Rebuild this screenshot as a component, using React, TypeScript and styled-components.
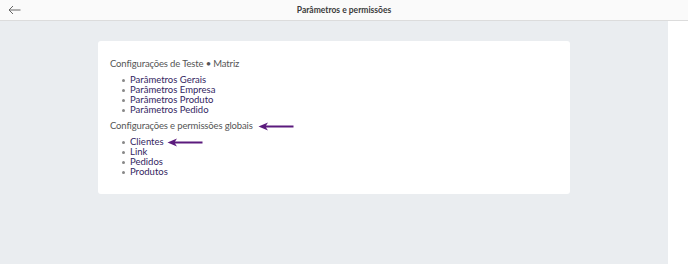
import React from 'react'
import styled, { createGlobalStyle } from 'styled-components'

const GlobalStyle = createGlobalStyle`
  html, body {
    margin: 0;
    padding: 0;
    height: 100%;
    background: #ffffff;
  }
  #root {
    height: 100%;
  }
`

const Page = styled.div`
  display: flex;
  flex-direction: column;
  height: 100vh;
  font-family: 'Lato', 'Open Sans', sans-serif;
`

const Header = styled.header`
  position: relative;
  height: 20px;
  flex: none;
  display: flex;
  align-items: center;
  justify-content: center;
  background: #fafafa;
  border-bottom: 1px solid #dcdcdc;
`

const BackButton = styled.button`
  position: absolute;
  left: 7px;
  top: 4px;
  width: 14px;
  height: 12px;
  padding: 0;
  border: none;
  background: none;
  display: flex;
  align-items: center;
  justify-content: center;
`

const Title = styled.h1`
  margin: 0;
  font-size: 8.5px;
  font-weight: 700;
  color: #3a3a3a;
`

const Body = styled.div`
  flex: 1;
  display: flex;
`

const Content = styled.main`
  flex: 1;
  background: #eaedf0;
  padding: 20px 98px 0 98px;
`

const Gutter = styled.div`
  width: 20px;
  background: #ffffff;
`

const Card = styled.section`
  background: #ffffff;
  border-radius: 3px;
  padding: 15px 12px 17px;
`

const SectionTitle = styled.h2<{ $gap?: number }>`
  margin: ${(p) => p.$gap ?? 0}px 0 0;
  font-family: 'Lato', sans-serif;
  font-size: 9.5px;
  letter-spacing: -0.15px;
  line-height: 16px;
  font-weight: 400;
  color: #555555;
  display: flex;
  align-items: center;
`

const List = styled.ul`
  margin: 3px 0 0;
  padding: 0;
  list-style: none;
`

const Item = styled.li`
  display: flex;
  align-items: center;
  gap: 5px;
  font-size: 9.5px;
  line-height: 10px;
  color: #33255f;
  &::before {
    content: '';
    width: 3px;
    height: 3px;
    margin-left: 12px;
    border-radius: 50%;
    background: #888888;
    flex: none;
  }
`

const Pointer = styled.svg<{ $gap: number }>`
  margin-left: ${(p) => p.$gap}px;
  flex: none;
`

function Arrow({ gap }: { gap: number }) {
  return (
    <Pointer $gap={gap} width="36" height="9" viewBox="0 0 36 9">
      <path d="M0.5 4.5 L10 0.5 L8 3.6 L35.5 3.6 L35.5 5.4 L8 5.4 L10 8.5 Z" fill="#5b1a7d" />
    </Pointer>
  )
}

const globalItems = ['Clientes', 'Link', 'Pedidos', 'Produtos']
const matrizItems = [
  'Parâmetros Gerais',
  'Parâmetros Empresa',
  'Parâmetros Produto',
  'Parâmetros Pedido',
]

export default function App() {
  return (
    <>
      <GlobalStyle />
      <Page>
        <Header>
          <BackButton aria-label="Voltar">
            <svg width="13" height="10" viewBox="0 0 13 10">
              <path
                d="M12.5 5 H1 M5 1 L1 5 L5 9"
                fill="none"
                stroke="#666"
                strokeWidth="1"
              />
            </svg>
          </BackButton>
          <Title>Parâmetros e permissões</Title>
        </Header>
        <Body>
          <Content>
            <Card>
              <SectionTitle>Configurações de Teste • Matriz</SectionTitle>
              <List>
                {matrizItems.map((item) => (
                  <Item key={item}>{item}</Item>
                ))}
              </List>
              <SectionTitle $gap={3}>
                Configurações e permissões globais
                <Arrow gap={5} />
              </SectionTitle>
              <List>
                {globalItems.map((item, i) => (
                  <Item key={item}>
                    {item}
                    {i === 0 && <Arrow gap={-2} />}
                  </Item>
                ))}
              </List>
            </Card>
          </Content>
          <Gutter />
        </Body>
      </Page>
    </>
  )
}
